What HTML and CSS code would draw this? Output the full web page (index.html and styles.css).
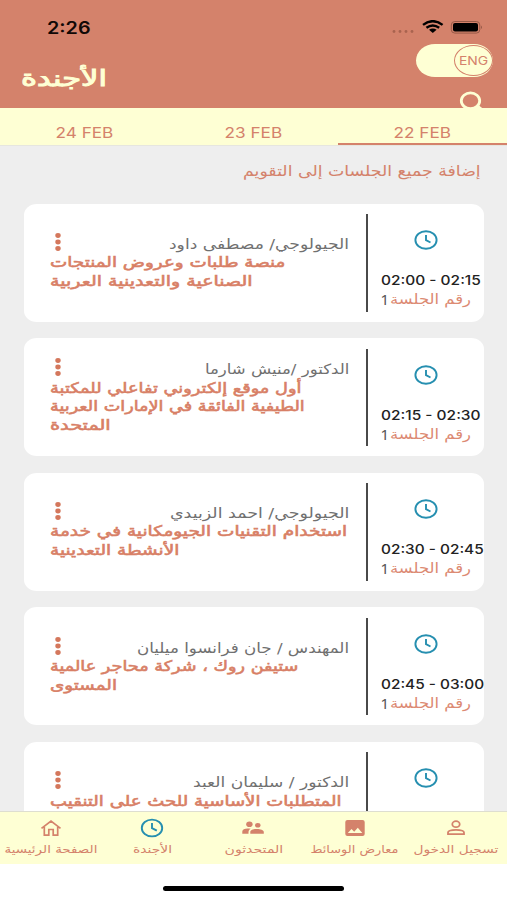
FILE: index.html
```html
<!DOCTYPE html>
<html lang="ar">
<head>
<meta charset="utf-8">
<title>الأجندة</title>
<link rel="stylesheet" href="styles.css">
</head>
<body>
<header class="header">
  <div class="status">
    <span class="clock-time"><span data-width="43">2:26</span></span>
    <svg class="status-icons" width="92" height="16" viewBox="0 0 92 16">
      <g fill="#a9634f"><circle cx="3" cy="11.5" r="1.4"/><circle cx="9" cy="11.5" r="1.4"/><circle cx="15" cy="11.5" r="1.4"/><circle cx="21" cy="11.5" r="1.4"/></g>
      <g fill="none" stroke="#000" stroke-width="2.4"><path d="M32 4.9Q41.8-2.6 51.6 4.9"/><path d="M35.4 7.8Q41.8 3 48.2 7.8"/></g>
      <path d="M38 9.8Q41.8 7.3 45.6 9.8L41.8 13Z"/>
      <rect x="60.3" y="1.5" width="28.5" height="11.6" rx="3.5" fill="none" stroke="#965947"/>
      <rect x="62" y="3" width="25" height="8.6" rx="2"/>
      <path d="M90 5.5q2 1.8 0 3.6z" fill="#965947"/>
    </svg>
  </div>
  <div class="title-row">
    <h1 class="page-title"><span dir="rtl" data-width="86">الأجندة</span></h1>
    <div class="tools">
      <div class="switch"><span class="knob"><span data-width="29">ENG</span></span></div>
      <svg class="search" width="26" height="18" viewBox="0 0 26 18"><ellipse cx="11.5" cy="9.8" rx="9.2" ry="7.9" fill="none" stroke="#feffd4" stroke-width="2.800"/><path d="M18 15l6 5" stroke="#feffd4" stroke-width="3.5"/></svg>
    </div>
  </div>
</header>
<nav class="tabs">
  <div class="tab"><span data-width="58">24 FEB</span></div>
  <div class="tab"><span data-width="58">23 FEB</span></div>
  <div class="tab active"><span data-width="58">22 FEB</span></div>
</nav>
<main class="agenda">
  <div class="add-all"><span dir="rtl" data-width="238">إضافة جميع الجلسات إلى التقويم</span></div>

  <article class="card">
    <div class="details">
      <div class="speaker"><svg class="more" viewBox="0 0 6 20"><ellipse cx="3" cy="3.5" rx="2.7" ry="2.4"/><ellipse cx="3" cy="10" rx="2.7" ry="2.4"/><ellipse cx="3" cy="16.5" rx="2.7" ry="2.4"/></svg><span dir="rtl" data-width="180">الجيولوجي/ مصطفى داود</span></div>
      <div class="line"><span dir="rtl" data-width="235">منصة طلبات وعروض المنتجات</span></div>
      <div class="line"><span dir="rtl" data-width="202">الصناعية والتعدينية العربية</span></div>
    </div>
    <div class="slot">
      <svg class="clock" viewBox="0 0 24 20"><ellipse cx="12" cy="10" rx="10.6" ry="8.7"/><path d="M12 5v5.2l4.5 2.3"/></svg>
      <div class="time"><span data-width="100">02:00 - 02:15</span></div>
      <div class="session"><b>1</b><span dir="rtl" data-width="81">رقم الجلسة</span></div>
    </div>
  </article>

  <article class="card">
    <div class="details">
      <div class="speaker"><svg class="more" viewBox="0 0 6 20"><ellipse cx="3" cy="3.5" rx="2.7" ry="2.4"/><ellipse cx="3" cy="10" rx="2.7" ry="2.4"/><ellipse cx="3" cy="16.5" rx="2.7" ry="2.4"/></svg><span dir="rtl" data-width="144">الدكتور /منيش شارما</span></div>
      <div class="line"><span dir="rtl" data-width="251">أول موقع إلكتروني تفاعلي للمكتبة</span></div>
      <div class="line"><span dir="rtl" data-width="255">الطيفية الفائقة في الإمارات العربية</span></div>
      <div class="line"><span dir="rtl" data-width="61">المتحدة</span></div>
    </div>
    <div class="slot">
      <svg class="clock" viewBox="0 0 24 20"><ellipse cx="12" cy="10" rx="10.6" ry="8.7"/><path d="M12 5v5.2l4.5 2.3"/></svg>
      <div class="time"><span data-width="100">02:15 - 02:30</span></div>
      <div class="session"><b>1</b><span dir="rtl" data-width="81">رقم الجلسة</span></div>
    </div>
  </article>

  <article class="card">
    <div class="details">
      <div class="speaker"><svg class="more" viewBox="0 0 6 20"><ellipse cx="3" cy="3.5" rx="2.7" ry="2.4"/><ellipse cx="3" cy="10" rx="2.7" ry="2.4"/><ellipse cx="3" cy="16.5" rx="2.7" ry="2.4"/></svg><span dir="rtl" data-width="179">الجيولوجي/ احمد الزبيدي</span></div>
      <div class="line"><span dir="rtl" data-width="297">استخدام التقنيات الجيومكانية في خدمة</span></div>
      <div class="line"><span dir="rtl" data-width="130">الأنشطة التعدينية</span></div>
    </div>
    <div class="slot">
      <svg class="clock" viewBox="0 0 24 20"><ellipse cx="12" cy="10" rx="10.6" ry="8.7"/><path d="M12 5v5.2l4.5 2.3"/></svg>
      <div class="time"><span data-width="103">02:30 - 02:45</span></div>
      <div class="session"><b>1</b><span dir="rtl" data-width="81">رقم الجلسة</span></div>
    </div>
  </article>

  <article class="card">
    <div class="details">
      <div class="speaker"><svg class="more" viewBox="0 0 6 20"><ellipse cx="3" cy="3.5" rx="2.7" ry="2.4"/><ellipse cx="3" cy="10" rx="2.7" ry="2.4"/><ellipse cx="3" cy="16.5" rx="2.7" ry="2.4"/></svg><span dir="rtl" data-width="212">المهندس / جان فرانسوا ميليان</span></div>
      <div class="line"><span dir="rtl" data-width="248">ستيفن روك ، شركة محاجر عالمية</span></div>
      <div class="line"><span dir="rtl" data-width="67">المستوى</span></div>
    </div>
    <div class="slot">
      <svg class="clock" viewBox="0 0 24 20"><ellipse cx="12" cy="10" rx="10.6" ry="8.7"/><path d="M12 5v5.2l4.5 2.3"/></svg>
      <div class="time"><span data-width="103">02:45 - 03:00</span></div>
      <div class="session"><b>1</b><span dir="rtl" data-width="81">رقم الجلسة</span></div>
    </div>
  </article>

  <article class="card">
    <div class="details">
      <div class="speaker"><svg class="more" viewBox="0 0 6 20"><ellipse cx="3" cy="3.5" rx="2.7" ry="2.4"/><ellipse cx="3" cy="10" rx="2.7" ry="2.4"/><ellipse cx="3" cy="16.5" rx="2.7" ry="2.4"/></svg><span dir="rtl" data-width="156">الدكتور / سليمان العبد</span></div>
      <div class="line"><span dir="rtl" data-width="291">المتطلبات الأساسية للحث على التنقيب</span></div>
    </div>
    <div class="slot">
      <svg class="clock" viewBox="0 0 24 20"><ellipse cx="12" cy="10" rx="10.6" ry="8.7"/><path d="M12 5v5.2l4.5 2.3"/></svg>
    </div>
  </article>
</main>
<nav class="bottom-nav">
  <div class="item">
    <svg viewBox="0 0 24 20"><path d="M2.5 10.3L12 3l9.500 7.300M5.300 9v8.200H9.800V11.500H14.200V17.200H18.700V9" fill="none" stroke="#d4826b" stroke-width="1.7"/></svg>
    <span dir="rtl" data-width="93">الصفحة الرئيسية</span>
  </div>
  <div class="item">
    <svg class="nav-clock" viewBox="0 0 24 20"><ellipse cx="12" cy="10" rx="10.2" ry="8.400"/><path d="M12 5v5.200l4.800 2.500"/></svg>
    <span dir="rtl" data-width="39">الأجندة</span>
  </div>
  <div class="item">
    <svg viewBox="0 0 24 20" fill="#d4826b"><ellipse cx="8.400" cy="6.300" rx="3.200" ry="2.800"/><ellipse cx="16.800" cy="7.300" rx="2.700" ry="2.300"/><path d="M1.300 15.700V13.500C1.300 10.700 5.500 10 9.700 10.800C7.600 12 7.400 13.500 7.500 15.700ZM9.300 15.700V14C9.300 10.100 22.800 10.100 22.800 14V15.700Z"/></svg>
    <span dir="rtl" data-width="59">المتحدثون</span>
  </div>
  <div class="item">
    <svg viewBox="0 0 24 20"><path fill="#d4826b" fill-rule="evenodd" d="M4.500 2H19.500Q21.700 2 21.700 4V16Q21.700 18 19.500 18H4.500Q2.300 18 2.300 16V4Q2.300 2 4.500 2ZM4.800 15H19.300L14.800 9.800L11.200 13.700L8.500 11Z"/></svg>
    <span dir="rtl" data-width="88">معارض الوسائط</span>
  </div>
  <div class="item">
    <svg viewBox="0 0 24 20" fill="none" stroke="#d4826b" stroke-width="1.800"><ellipse cx="12" cy="6.200" rx="3.700" ry="3"/><path d="M4 16.200V14.500C4 10.900 20 10.900 20 14.500V16.200Z"/></svg>
    <span dir="rtl" data-width="85">تسجيل الدخول</span>
  </div>
</nav>
<footer class="home-area"><div class="home-bar"></div></footer>
<script src="fit.js"></script>
</body>
</html>
```
FILE: styles.css
```css
* { box-sizing: border-box; }
body {
  margin: 0;
  width: 507px;
  height: 900px;
  overflow: hidden;
  display: flex;
  flex-direction: column;
  background: #fff;
  font-family: Inter, "DejaVu Sans", sans-serif;
}
svg { display: block; flex: none; }
[data-width] { display: inline-block; flex: none; white-space: nowrap; transform-origin: center; }
[dir="rtl"] { font-family: "DejaVu Sans", sans-serif; }

.header { flex: none; height: 108px; background: #d4826b; overflow: hidden; }
.status { display: flex; justify-content: space-between; height: 44px; padding: 20px 24px 0 47px; }
.clock-time { font-size: 17px; line-height: 16px; font-weight: 600; color: #100806; }
.clock-time span { transform-origin: left; }
.title-row { display: flex; justify-content: space-between; padding: 0 14px 0 21px; }
.page-title { margin: 20px 0 0; font-size: 22px; font-weight: 400; line-height: 28px; color: #feffd4; -webkit-text-stroke: 1px #feffd4; }
.page-title span { transform-origin: left; }
.tools { display: flex; flex-direction: column; align-items: flex-end; }
.switch { width: 77px; height: 33px; border-radius: 19px / 16.5px; background: #feffd4; display: flex; justify-content: flex-end; padding: 1px 0; }
.knob { width: 39px; height: 31px; border: 1px solid #d4826b; border-radius: 50%; display: flex; align-items: center; justify-content: center; color: #d4826b; font-size: 12px; }
.search { margin: 13.500px 8px 0 0; }

.tabs { flex: none; height: 38px; display: grid; grid-template-columns: repeat(3, 1fr); background: #feffd4; border-bottom: 1px solid #e6e6df; }
.tab { display: flex; justify-content: center; padding-top: 15px; font-size: 14.5px; line-height: 20px; color: #d4826b; }
.tab.active { border-bottom: 2px solid #d4826b; height: 37px; }

.agenda { flex: none; height: 665px; overflow: hidden; background: #eee; padding: 0 23px 0 24px; }
.add-all { height: 57.500px; padding: 15px 3px 0 0; display: flex; justify-content: flex-end; font-size: 15px; line-height: 20px; color: #d4826b; }
.add-all span, .speaker span { transform-origin: right; }
.card { height: 118px; margin-bottom: 16.600px; border-radius: 13px / 11px; background: #fff; display: flex; align-items: center; }
.details { width: 325px; margin-left: 25.500px; padding-right: 26px; min-height: 55.500px; flex: none; }
.speaker { width: 299.500px; height: 18.500px; display: flex; justify-content: flex-end; align-items: center; font-size: 14px; line-height: 18.500px; color: #707070; }
.more { width: 6px; height: 20px; margin: -4px auto 0 5.500px; fill: #d4775c; }
.line { height: 18.500px; font-size: 14.500px; line-height: 18.500px; color: #d87f66; -webkit-text-stroke: 0.600px #d87f66; display: flex; }
.line span { transform-origin: left; }
.slot { align-self: flex-start; flex: none; margin-top: 10.500px; margin-left: -8.500px; height: 97.500px; width: 118px; border-left: 2px solid #4a4a4a; padding-left: 12.500px; }
.clock { width: 24px; height: 20px; margin: 16px 0 0 33px; }
.clock, .nav-clock { fill: none; stroke: #268fb0; stroke-width: 1.900; }
.time { margin-top: 20px; height: 20px; font-size: 13px; line-height: 20px; font-weight: 500; color: #222; display: flex; }
.time span, .session span { transform-origin: left; }
.session { display: flex; height: 18px; line-height: 18px; font-size: 14px; color: #dc8a73; }
.session b { width: 9px; font-family: "Noto Sans", sans-serif; font-size: 15px; font-weight: 400; color: #555; }

.bottom-nav { flex: none; height: 53px; display: grid; grid-template-columns: repeat(5, 1fr); background: #feffd4; border-top: 1px solid #deded0; }
.item { min-width: 0; display: flex; flex-direction: column; align-items: center; padding-top: 6px; font-size: 11px; line-height: 16px; color: #d4826b; }
.item svg { width: 24px; height: 20px; margin-bottom: 4px; }
.home-area { display: flex; justify-content: center; padding-top: 22px; }
.home-bar { width: 181px; height: 5px; border-radius: 3px; background: #000; }
```
FILE: fit.js
```js
document.querySelectorAll('[data-width]').forEach(function (el) {
  el.style.transform = 'scaleX(' + (Number(el.dataset.width) / el.offsetWidth) + ')';
});
```
